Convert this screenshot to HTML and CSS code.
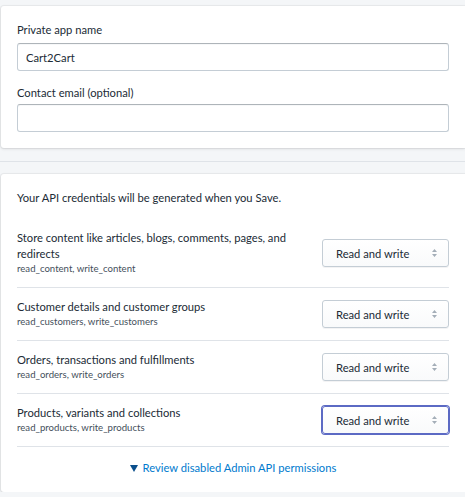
FILE: index.html
```html
<!DOCTYPE html>
<html lang="en">

<head>
    <meta charset="UTF-8">
    <meta name="viewport" content="width=device-width, initial-scale=1.0">
    <title>Private app</title>
    <link rel="stylesheet" href="styles.css">
</head>

<body>
    <div class="card">
        <label class="field-label" for="app-name">Private app name</label>
        <input id="app-name" class="text-field" type="text" value="Cart2Cart">
        <label class="field-label second" for="contact-email">Contact email (optional)</label>
        <input id="contact-email" class="text-field" type="text" value="">
    </div>

    <div class="section-divider"></div>

    <div class="card">
        <p class="intro">Your API credentials will be generated when you Save.</p>

        <div class="perm-row first">
            <div class="perm-text">
                <div class="perm-title">Store content like articles, blogs, comments, pages, and redirects</div>
                <div class="perm-scope">read_content, write_content</div>
            </div>
            <div class="select">
                <span>Read and write</span>
                <svg class="arrows" width="5" height="8" viewBox="0 0 5 8"><path d="M2.5 0 L5 3 H0 Z M2.5 8 L5 5 H0 Z" fill="#a4aeb8"/></svg>
            </div>
        </div>

        <div class="perm-row">
            <div class="perm-text">
                <div class="perm-title">Customer details and customer groups</div>
                <div class="perm-scope">read_customers, write_customers</div>
            </div>
            <div class="select">
                <span>Read and write</span>
                <svg class="arrows" width="5" height="8" viewBox="0 0 5 8"><path d="M2.5 0 L5 3 H0 Z M2.5 8 L5 5 H0 Z" fill="#a4aeb8"/></svg>
            </div>
        </div>

        <div class="perm-row">
            <div class="perm-text">
                <div class="perm-title">Orders, transactions and fulfillments</div>
                <div class="perm-scope">read_orders, write_orders</div>
            </div>
            <div class="select">
                <span>Read and write</span>
                <svg class="arrows" width="5" height="8" viewBox="0 0 5 8"><path d="M2.5 0 L5 3 H0 Z M2.5 8 L5 5 H0 Z" fill="#a4aeb8"/></svg>
            </div>
        </div>

        <div class="perm-row">
            <div class="perm-text">
                <div class="perm-title">Products, variants and collections</div>
                <div class="perm-scope">read_products, write_products</div>
            </div>
            <div class="select focused">
                <span>Read and write</span>
                <svg class="arrows" width="5" height="8" viewBox="0 0 5 8"><path d="M2.5 0 L5 3 H0 Z M2.5 8 L5 5 H0 Z" fill="#a4aeb8"/></svg>
            </div>
        </div>

        <div class="review-row">
            <a class="review-link" href="#">
                <svg class="caret" width="8" height="7" viewBox="0 0 8 7"><path d="M0 0 H8 L4 7 Z" fill="#0a4f8c"/></svg>
                Review disabled Admin API permissions
            </a>
        </div>
    </div>
</body>

</html>
```

FILE: styles.css
```css
body {
    margin: 0;
    background-color: #f4f6f8;
    font-family: Lato, "Noto Sans", sans-serif;
    font-size: 11.2px;
    color: #212b36;
    overflow: hidden;
}

.card {
    margin: 6px 0 0 1px;
    padding: 16px;
    background-color: #fff;
    border-radius: 3px 0 0 3px;
    box-shadow: 0 0 0 1px rgba(63, 63, 68, 0.05), 0 1px 3px 0 rgba(63, 63, 68, 0.15);
}

.field-label {
    display: block;
    line-height: 16px;
    margin-bottom: 5px;
}

.field-label.second {
    margin-top: 14px;
    margin-bottom: 3px;
}

.text-field {
    display: block;
    box-sizing: border-box;
    width: 100%;
    height: 28px;
    margin: 0;
    padding: 0 8px;
    font-family: inherit;
    font-size: 11.2px;
    color: #212b36;
    border: 1px solid #c4cdd5;
    border-top-color: #aeb4b9;
    border-radius: 3px;
    box-shadow: inset 0 1px 0 0 rgba(99, 115, 129, 0.05);
    outline: none;
}

.section-divider {
    margin-top: 13px;
    border-top: 1px solid #dfe3e8;
    height: 0;
}

.section-divider + .card {
    margin-top: 12px;
}

.intro {
    margin: 0 0 12px;
    line-height: 16px;
}

.perm-row {
    display: flex;
    align-items: center;
    justify-content: space-between;
    gap: 20px;
    padding: 11px 0;
    border-top: 1px solid #dfe3e8;
}

.perm-row.first {
    border-top: none;
    padding-top: 12px;
}

.perm-text {
    flex: 1;
}

.perm-title {
    line-height: 16px;
}

.perm-scope {
    font-size: 9.6px;
    line-height: 14px;
    color: #454f5b;
}

.select {
    flex: none;
    box-sizing: border-box;
    width: 127px;
    height: 28px;
    display: flex;
    align-items: center;
    justify-content: space-between;
    padding: 0 11px 0 13px;
    background: linear-gradient(180deg, #fff, #f9fafb);
    border: 1px solid #c4cdd5;
    border-radius: 3px;
    box-shadow: 0 1px 0 0 rgba(22, 29, 37, 0.05);
}

.select.focused {
    border-color: #5c6ac4;
    box-shadow: 0 0 0 1px #5c6ac4;
}

.review-row {
    border-top: 1px solid #dfe3e8;
    padding-top: 13px;
    text-align: center;
    line-height: 16px;
}

.review-link {
    color: #007ace;
    text-decoration: none;
}

.caret {
    margin-right: 2px;
    vertical-align: 0;
}
```
